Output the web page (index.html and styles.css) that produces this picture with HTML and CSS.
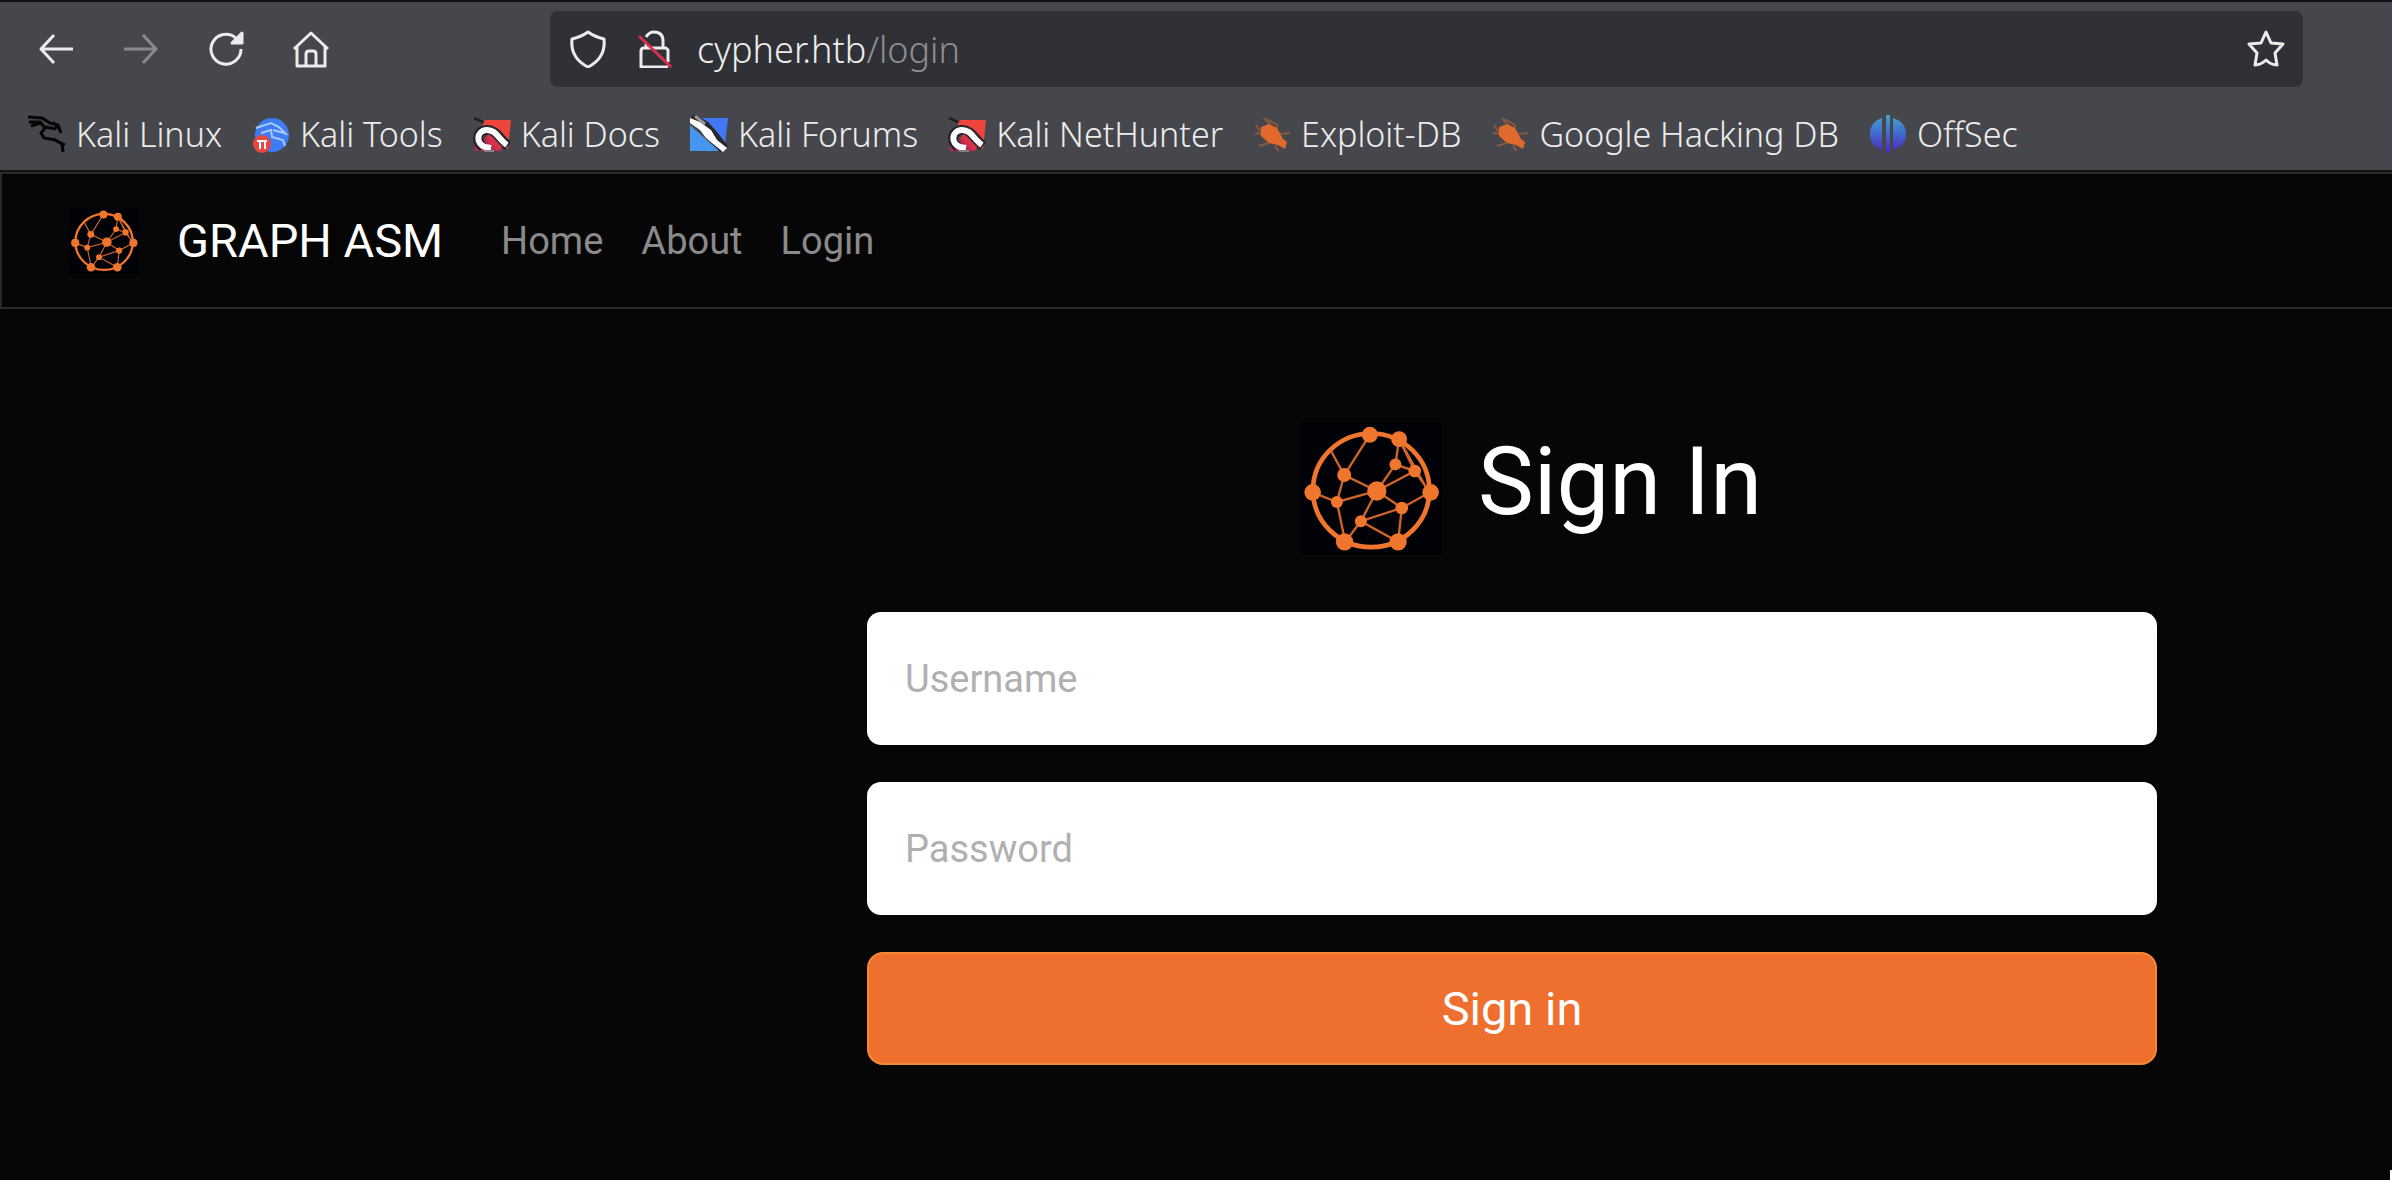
FILE: index.html
```html
<!DOCTYPE html>
<html lang="en">
<head>
<meta charset="utf-8">
<meta name="viewport" content="width=device-width, initial-scale=1">
<title>GRAPH ASM - Login</title>
<link rel="stylesheet" href="styles.css">
</head>
<body>
<svg class="sprites" aria-hidden="true">
  <symbol id="globe" viewBox="57 66 427 399">
    <rect x="57" y="66" width="427" height="399" fill="#010208"/>
    <ellipse cx="271" cy="271" rx="175" ry="171" fill="none" stroke="#f0752d" stroke-width="14"/>
    <path d="M267 104L190 225M150 152L190 225L288 273M190 225L168 306M95 277L168 306L288 273M168 306L193 426L240 364L288 273L363 324L448 277M363 324L240 364L352 426L363 324M288 273L344 193L402 213L288 273M344 193L355 117L402 213L448 277M362 130L436 262" fill="none" stroke="#d0652a" stroke-width="7"/>
    <g fill="#f0752d">
      <circle cx="267" cy="104" r="24"/><circle cx="355" cy="117" r="24"/><circle cx="190" cy="225" r="21"/><circle cx="344" cy="193" r="18"/><circle cx="402" cy="213" r="19"/><circle cx="95" cy="277" r="25"/><circle cx="450" cy="277" r="25"/><circle cx="288" cy="273" r="29"/><circle cx="168" cy="306" r="18"/><circle cx="363" cy="324" r="19"/><circle cx="240" cy="364" r="18"/><circle cx="191" cy="426" r="26"/><circle cx="352" cy="426" r="26"/>
    </g>
  </symbol>
  <symbol id="magnet" viewBox="0 0 38 38">
    <path d="M12 5H38L35 34L24 30L8 14Z" fill="#ee463c"/>
    <path d="M1 28L8 24L30 27L28 36H2Z" fill="#b72a52"/>
    <path d="M1 3L10 7" stroke="#222" stroke-width="3"/>
    <path d="M10 32C2 26 4 16 13 15C23 14 27 25 35 31" fill="none" stroke="#29252c" stroke-width="10"/>
    <path d="M14 21L27 34" stroke="#d43249" stroke-width="6"/>
    <path d="M18 33L12 32C2 28 4 16 13 15C23 14 26 25 34 30" fill="none" stroke="#fff" stroke-width="6"/>
    <path d="M11 36H21" stroke="#858287" stroke-width="2"/>
  </symbol>
  <symbol id="bug" viewBox="0 0 38 38">
    <path d="M11 3L19 12M3 10L10 20M25 10L21 17M27 19L37 18M6 31L16 28M22 30L25 36M2 18L10 19M14 4L24 10" stroke="#8a573f" stroke-width="2"/>
    <path d="M8 12L16 9L24 13L30 24L34 27L32 34L25 30L16 28L8 21Z" fill="#e2692d"/>
  </symbol>
</svg>

<header class="browser">
  <div class="toolbar">
    <div class="controls">
      <button class="tool" type="button" aria-label="Back"><svg viewBox="0 0 38 38"><path d="M36 19H4M17 5L4 19L17 33"/></svg></button>
      <button class="tool tool-disabled" type="button" aria-label="Forward" disabled><svg viewBox="0 0 38 38"><path d="M2 19H34M21 5L34 19L21 33"/></svg></button>
      <button class="tool" type="button" aria-label="Reload"><svg viewBox="0 0 38 38"><path d="M34 19A15 15 0 1 1 29 8"/><path class="solid" d="M35 3V13H25Z"/></svg></button>
      <button class="tool" type="button" aria-label="Home"><svg viewBox="0 0 38 38"><path d="M2 19L19 3L36 19M5 17V36H33V17M14 36V24Q14 21 17 21H21Q24 21 24 24V36"/></svg></button>
    </div>
    <div class="address">
      <svg class="mark" viewBox="0 0 38 38"><path d="M19 2Q26 7 35 9Q37 28 19 37Q1 28 3 9Q12 7 19 2Z"/></svg>
      <svg class="mark" viewBox="0 0 38 38"><path d="M10 7Q13 2 18 2Q27 2 27 11V18M10 18V14M32 32V20L30 18H8Q5 18 5 21V37H32"/><path class="slash" d="M3 6L35 37"/></svg>
      <span class="url">cypher.htb<span class="path">/login</span></span>
      <button class="star" type="button" aria-label="Bookmark this page"><svg viewBox="0 0 38 38"><path d="M19 2L24 13L36 14L28 23L30 35Q24 35 19 30Q14 35 8 35L10 23L2 14L14 13Z"/></svg></button>
    </div>
  </div>
  <nav class="bookmarks" aria-label="Bookmarks">
    <a href="#"><svg viewBox="0 0 38 38"><path d="M0 2L14 3L22 8L30 10L33 18M1 7L13 7M3 11L13 8L17 13L13 18L16 23L27 25L34 29L35 37M17 12L28 14M25 7L31 14M25 24L37 30" fill="none" stroke="#050506" stroke-width="3"/></svg>Kali Linux</a>
    <a href="#"><svg viewBox="0 0 38 38"><circle cx="20" cy="20" r="17" fill="#3f7bf3"/><path d="M4 13L19 8L27 12L35 20M9 18L19 15L20 22L31 25L33 31M21 15L32 18" fill="none" stroke="#a9c9fb" stroke-width="2"/><circle cx="10" cy="29" r="9" fill="#e8473e"/><path d="M5 26H15M8 26V34M13 26V34" stroke="#fff" stroke-width="2"/></svg>Kali Tools</a>
    <a href="#"><svg><use href="#magnet"/></svg>Kali Docs</a>
    <a href="#"><svg viewBox="0 0 38 38"><path d="M12 3H38L35 29Z" fill="#4177f5"/><path d="M0 10L29 36H0Z" fill="#4696ee"/><path d="M1 3L15 11L23 20L34 34" fill="none" stroke="#28272b" stroke-width="10"/><path d="M0 3L10 7L21 15L27 25L37 33L33 37L27 32L16 23L10 15L0 8Z" fill="#fff"/><path d="M5 1L15 9" stroke="#999" stroke-width="3"/></svg>Kali Forums</a>
    <a href="#"><svg><use href="#magnet"/></svg>Kali NetHunter</a>
    <a href="#"><svg><use href="#bug"/></svg>Exploit-DB</a>
    <a href="#"><svg><use href="#bug"/></svg>Google Hacking DB</a>
    <a href="#"><svg viewBox="0 0 38 38"><defs><linearGradient id="violet" x1="0" y1="0" x2="0" y2="1"><stop offset="0" stop-color="#45a4c8"/><stop offset=".5" stop-color="#4168ce"/><stop offset="1" stop-color="#5125bd"/></linearGradient></defs><path d="M13 3V35Q1 31 1 19T13 3ZM24 3V35Q37 31 37 19T24 3ZM17 0H21V38H17Z" fill="url(#violet)"/></svg>OffSec</a>
  </nav>
</header>

<nav class="navbar" aria-label="Main">
  <a class="brand" href="#"><svg class="brand-logo"><use href="#globe"/></svg>GRAPH ASM</a>
  <a class="nav-link" href="#">Home</a>
  <a class="nav-link" href="#">About</a>
  <a class="nav-link" href="#">Login</a>
</nav>

<main class="page">
  <form class="signin">
    <h1 class="title"><svg class="title-logo"><use href="#globe"/></svg>Sign In</h1>
    <input class="field" type="text" aria-label="Username" placeholder="Username">
    <input class="field" type="password" aria-label="Password" placeholder="Password">
    <button class="submit" type="button">Sign in</button>
  </form>
</main>
<div class="window-edge"></div>
</body>
</html>
```
FILE: styles.css
```css
* { box-sizing: border-box; }

body {
  position: relative;
  display: flex;
  flex-direction: column;
  min-height: 100vh;
  margin: 0;
  background: #060606;
  color: #fff;
  font-family: Roboto, sans-serif;
  font-size: 38px;
}

a { color: inherit; text-decoration: none; }
button, input { font: inherit; }
svg { display: block; flex: none; }
.sprites { position: absolute; width: 0; height: 0; }

.browser {
  border-top: 2px solid #111116;
  border-bottom: 2px solid #111116;
  background: #46474c;
  color: #ececec;
  font-family: "Noto Sans", sans-serif;
  font-size: 34px;
  font-weight: 300;
}

.toolbar {
  display: grid;
  grid-template-columns: 550px 1fr;
  align-items: center;
  padding: 9px 89px 0 0;
}

.controls { display: flex; gap: 47px; padding-left: 37px; }
.tool, .star { padding: 0; border: 0; background: none; }
.tool svg, .star svg, .mark {
  width: 38px;
  height: 38px;
  fill: none;
  stroke: #ececec;
  stroke-width: 3;
  stroke-linejoin: round;
}
.tool-disabled { opacity: .4; }
.tool .solid { fill: #ececec; }
.mark .slash { stroke: #d8304c; }

.address {
  display: flex;
  align-items: center;
  height: 76px;
  padding: 0 18px 0 19px;
  border-radius: 8px;
  background: #303136;
}
.mark + .mark { margin-left: 29px; }
.url { flex: 1; margin-left: 23px; font-size: 36px; }
.path { color: #8e8e91; }

.bookmarks {
  display: flex;
  align-items: center;
  gap: 30px;
  height: 83px;
  padding: 11px 28px 0;
}
.bookmarks a { display: flex; align-items: center; gap: 10px; line-height: 48px; white-space: nowrap; }
.bookmarks svg { width: 38px; height: 38px; }

.navbar {
  display: flex;
  align-items: center;
  gap: 38px;
  height: 137px;
  padding-left: 67px;
  border: 2px solid #2a2a2a;
  border-right: 0;
  color: #8a8a8a;
}
.brand { display: flex; align-items: center; gap: 38px; margin-right: 20px; color: #fff; font-size: 47px; }
.brand-logo { width: 70px; height: 66px; }

.page {
  display: grid;
  grid-template-columns: 867fr 1290fr 235fr;
  padding-top: 113px;
}
.signin { grid-column: 2; display: flex; flex-direction: column; gap: 37px; }
.title {
  display: flex;
  align-items: flex-start;
  justify-content: center;
  gap: 36px;
  margin: 0 0 20px;
  padding-left: 38px;
  font-size: 94px;
  font-weight: 400;
  line-height: 120px;
}
.title-logo { width: 142px; height: 133px; }
.field {
  width: 100%;
  height: 133px;
  padding: 0 38px;
  border: 0;
  border-radius: 14px;
  background: #fff;
  color: #222;
}
.field::placeholder { color: #b0b0b0; opacity: 1; }
.submit {
  height: 113px;
  border: 2px solid #f28a32;
  border-radius: 16px;
  background: #ef6f2e;
  color: #fff;
  font-size: 47px;
}

.window-edge { position: absolute; right: 0; bottom: 0; width: 2px; height: 10px; background: #fff; }
```
